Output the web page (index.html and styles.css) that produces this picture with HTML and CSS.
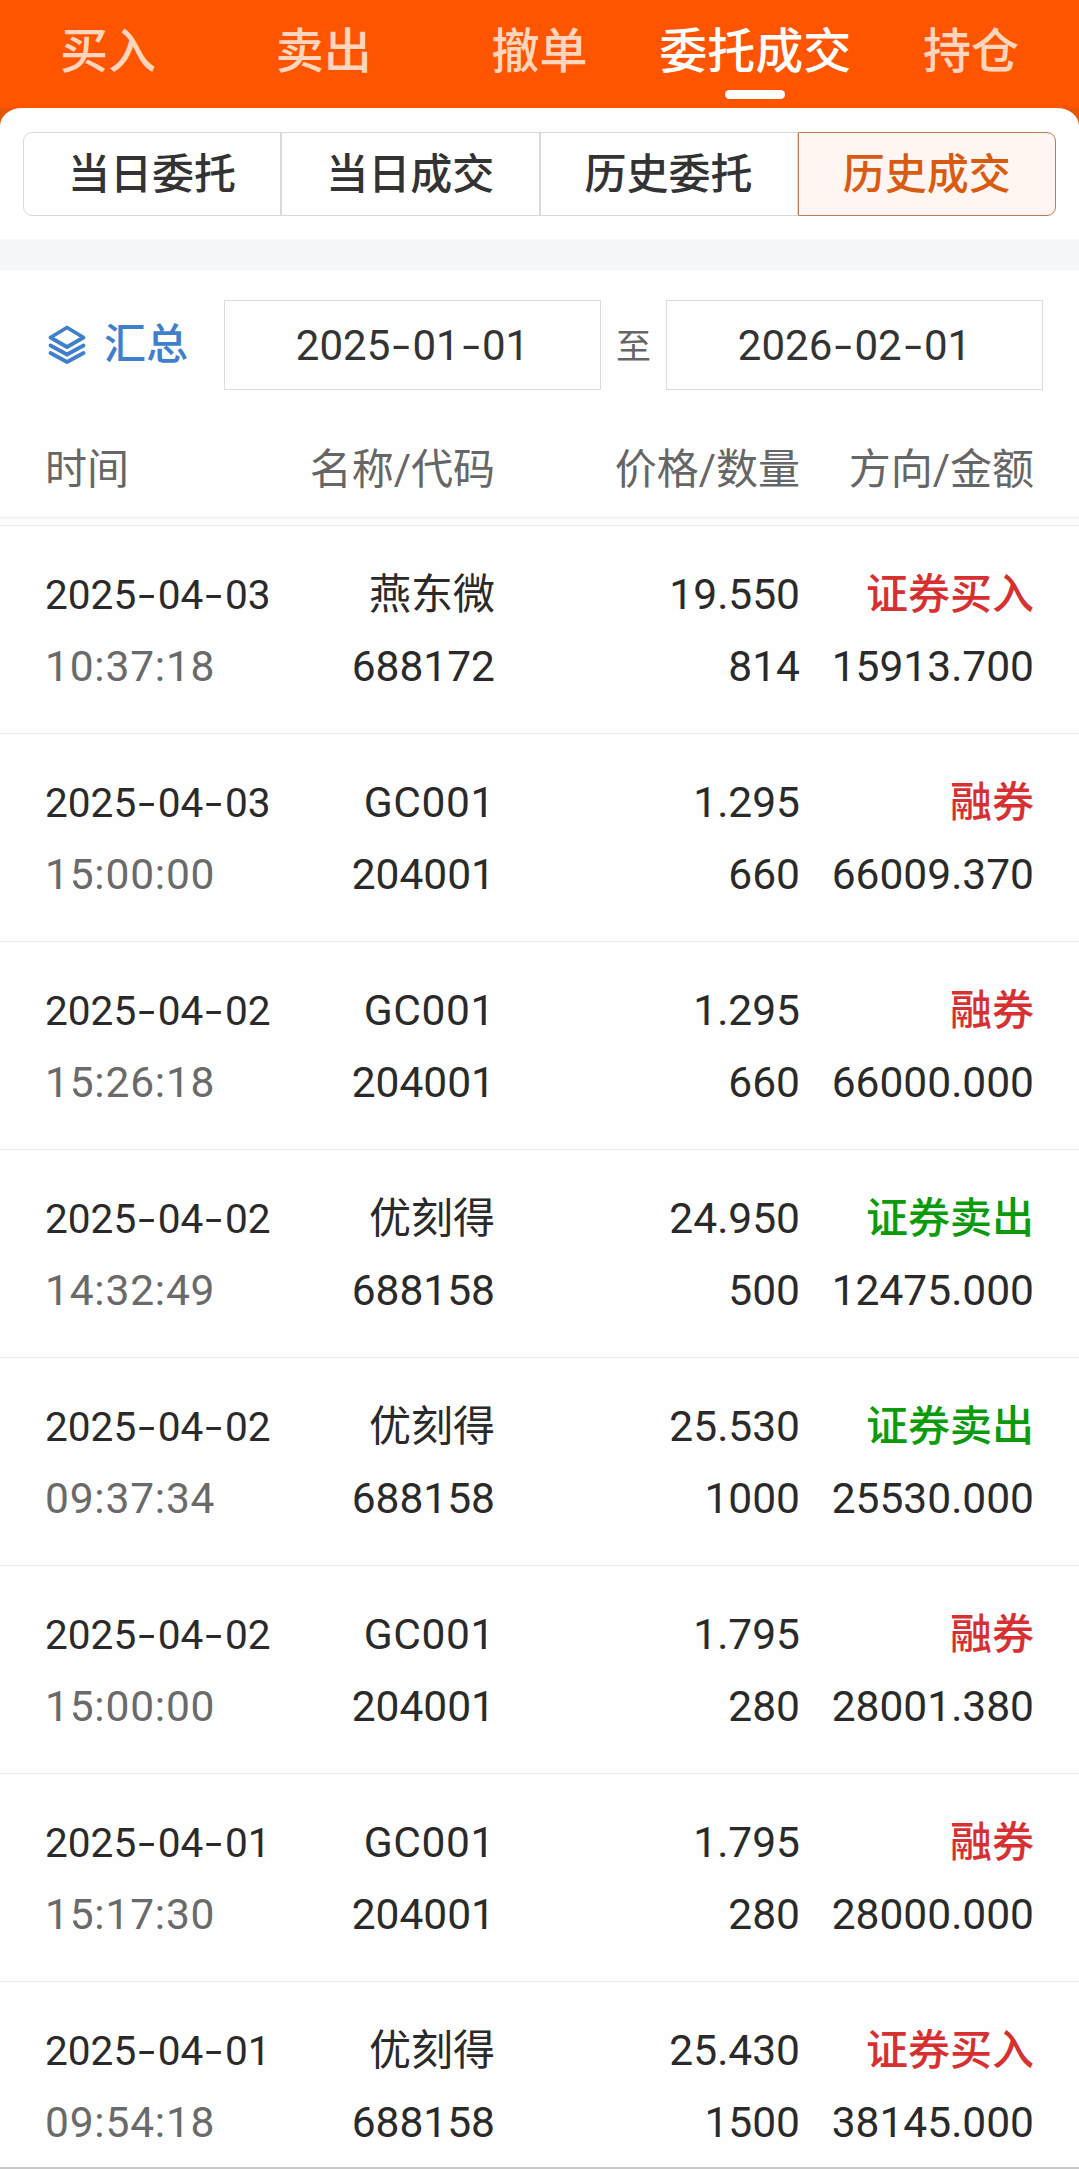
FILE: index.html
```html
<!DOCTYPE html>
<html lang="zh-CN">
<head>
    <meta charset="UTF-8">
    <meta name="viewport" content="width=device-width, initial-scale=1.0">
    <title>历史成交</title>
    <link rel="stylesheet" href="styles.css">
</head>
<body>
    <nav class="top-nav">
        <a class="nav-item">买入</a>
        <a class="nav-item">卖出</a>
        <a class="nav-item">撤单</a>
        <a class="nav-item active">委托成交</a>
        <a class="nav-item">持仓</a>
    </nav>

    <div class="tabs-wrap">
        <div class="tabs-panel">
            <div class="tabs">
                <div class="tab">当日委托</div>
                <div class="tab">当日成交</div>
                <div class="tab">历史委托</div>
                <div class="tab active">历史成交</div>
            </div>
        </div>
    </div>

    <div class="filter">
        <div class="summary">
            <svg class="layers" viewBox="0 0 40 40" fill="none" stroke="currentColor" stroke-width="3.8" stroke-linecap="round" stroke-linejoin="round">
                <path d="M20 2.5 L36.5 12.5 L20 22 L3.5 12.5 Z"/>
                <path d="M3.5 20.5 L20 29.5 L36.5 20.5"/>
                <path d="M3.5 28 L20 37 L36.5 28"/>
            </svg>
            <span>汇总</span>
        </div>
        <div class="date-box" data-date="2025-01-01"></div>
        <span class="to">至</span>
        <div class="date-box" data-date="2026-02-01"></div>
    </div>

    <div class="grid list-head">
        <span>时间</span>
        <span>名称/代码</span>
        <span>价格/数量</span>
        <span>方向/金额</span>
    </div>

    <div class="list" id="list"></div>

    <script>
        const deals = [
            ['2025-04-03', '10:37:18', '燕东微', '688172', '19.550', '814', '证券买入', '15913.700'],
            ['2025-04-03', '15:00:00', 'GC001', '204001', '1.295', '660', '融券', '66009.370'],
            ['2025-04-02', '15:26:18', 'GC001', '204001', '1.295', '660', '融券', '66000.000'],
            ['2025-04-02', '14:32:49', '优刻得', '688158', '24.950', '500', '证券卖出', '12475.000'],
            ['2025-04-02', '09:37:34', '优刻得', '688158', '25.530', '1000', '证券卖出', '25530.000'],
            ['2025-04-02', '15:00:00', 'GC001', '204001', '1.795', '280', '融券', '28001.380'],
            ['2025-04-01', '15:17:30', 'GC001', '204001', '1.795', '280', '融券', '28000.000'],
            ['2025-04-01', '09:54:18', '优刻得', '688158', '25.430', '1500', '证券买入', '38145.000']
        ];

        // Wide dashes between the date parts
        function formatDate(date) {
            return date.split('-').join('<span class="dash">-</span>');
        }

        document.querySelectorAll('.date-box').forEach(function(box) {
            box.innerHTML = formatDate(box.dataset.date);
        });

        document.getElementById('list').innerHTML = deals.map(function(d) {
            const side = d[6] === '证券卖出' ? 'sell' : 'buy';
            const name = d[2].startsWith('GC') ? 'name repo' : 'name';
            return `
                <div class="grid row">
                    <span class="date">${formatDate(d[0])}</span>
                    <span class="${name}">${d[2]}</span>
                    <span>${d[4]}</span>
                    <span class="${side}">${d[6]}</span>
                    <span class="time">${d[1]}</span>
                    <span>${d[3]}</span>
                    <span>${d[5]}</span>
                    <span>${d[7]}</span>
                </div>`;
        }).join('');
    </script>
</body>
</html>
```
FILE: styles.css
```css
* {
    margin: 0;
    padding: 0;
    box-sizing: border-box;
}

body {
    font-family: Roboto, 'Noto Sans CJK SC', sans-serif;
    font-size: 42px;
    color: #2a2a2a;
    background: #fefefe;
    height: 2169px;
    overflow: hidden;
    border-bottom: 2px solid #c8c8c8;
}

.top-nav {
    display: flex;
    height: 108px;
    background: #ff5500;
}

.nav-item {
    flex: 1;
    display: flex;
    flex-direction: column;
    align-items: center;
    padding-top: 17px;
    font-size: 48px;
    font-weight: 500;
    line-height: 70px;
    white-space: nowrap;
    color: #ffd6bd;
}

.nav-item.active {
    color: #fff;
}

.nav-item.active::after {
    content: '';
    width: 60px;
    height: 9px;
    margin-top: 3px;
    border-radius: 5px;
    background: #fff;
}

.tabs-wrap {
    background: #e65505;
}

.tabs-panel {
    height: 131px;
    padding: 24px 23px 0;
    border-radius: 22px 22px 0 0 / 18px 18px 0 0;
    background: #fff;
}

.tabs {
    display: flex;
    height: 84px;
}

.tab {
    flex: 1;
    border: 1px solid #d6dadb;
    text-align: center;
    line-height: 84px;
    font-weight: 500;
    color: #333;
}

.tab:first-child {
    border-radius: 9px 0 0 9px;
}

.tab.active {
    border: 1px solid #c07a55;
    border-radius: 0 9px 9px 0;
    background: #fff6f2;
    color: #d95b12;
}

.filter {
    display: flex;
    align-items: center;
    height: 181px;
    padding: 0 35px 0 47px;
    border-top: 31px solid #f6f7f9;
}

.summary {
    display: flex;
    align-items: center;
    width: 177px;
    line-height: 60px;
    color: #3f7fcc;
    font-weight: 500;
}

.layers {
    width: 40px;
    height: 40px;
    margin-right: 17px;
}

.date-box {
    width: 377px;
    height: 90px;
    border: 1px solid #dcdcdc;
    text-align: center;
    line-height: 89px;
    color: #333;
}

.to {
    width: 65px;
    padding-bottom: 3px;
    text-align: center;
    font-size: 35px;
    color: #666;
}

.grid {
    display: grid;
    grid-template-columns: 231px 219px 305px 234px;
    padding: 0 44px 0 45px;
    text-align: right;
}

.grid > span:nth-child(4n + 1) {
    text-align: left;
}

.list-head {
    height: 99px;
    line-height: 99px;
    color: #666;
    border-bottom: 3px solid #f4f6f6;
}

.list {
    margin-top: 6px;
    border-top: 1px solid #ebebeb;
}

.row {
    height: 208px;
    padding-top: 33px;
    line-height: 72px;
    font-size: 42.5px;
    grid-auto-rows: 72px;
    border-bottom: 1px solid #ebebeb;
}

.row .time {
    color: #6a6a6a;
    letter-spacing: 0.8px;
}

.row .date {
    font-size: 40.6px;
}

.row .name {
    font-size: 42px;
}

.row .repo {
    font-size: 42.5px;
    letter-spacing: 0.6px;
}

.dash {
    display: inline-block;
    width: 0.53em;
    text-align: center;
    transform: scaleX(1.5);
}

.row .buy,
.row .sell {
    font-size: 42px;
    font-weight: 500;
}

.buy {
    color: #d63031;
}

.sell {
    color: #0a9a0a;
}
```
